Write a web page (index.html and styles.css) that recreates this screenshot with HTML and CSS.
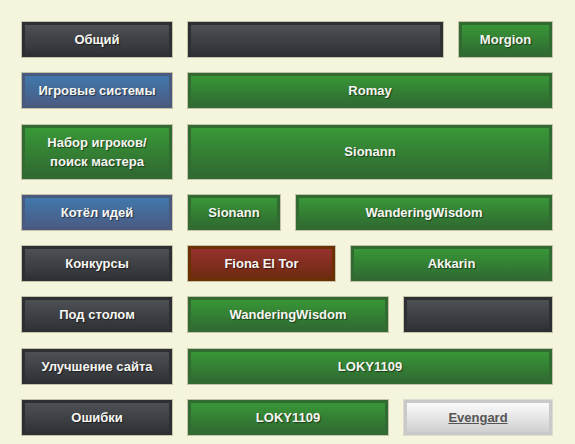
FILE: index.html
```html
<!DOCTYPE html>
<html lang="ru">
<head>
<meta charset="utf-8">
<title>Форум</title>
<link rel="stylesheet" href="styles.css">
</head>
<body>
<div class="board">
  <div class="row">
    <div class="btn dark side">Общий</div>
    <div class="btn dark w257"></div>
    <div class="btn green fill">Morgion</div>
  </div>
  <div class="row">
    <div class="btn blue side">Игровые системы</div>
    <div class="btn green fill">Romay</div>
  </div>
  <div class="row tall">
    <div class="btn green side">Набор игроков/<br>поиск мастера</div>
    <div class="btn green fill">Sionann</div>
  </div>
  <div class="row">
    <div class="btn blue side">Котёл идей</div>
    <div class="btn green w94">Sionann</div>
    <div class="btn green fill">WanderingWisdom</div>
  </div>
  <div class="row">
    <div class="btn dark side">Конкурсы</div>
    <div class="btn red w149">Fiona El Tor</div>
    <div class="btn green fill">Akkarin</div>
  </div>
  <div class="row">
    <div class="btn dark side">Под столом</div>
    <div class="btn green w202">WanderingWisdom</div>
    <div class="btn dark fill"></div>
  </div>
  <div class="row">
    <div class="btn dark side">Улучшение сайта</div>
    <div class="btn green fill">LOKY1109</div>
  </div>
  <div class="row">
    <div class="btn dark side">Ошибки</div>
    <div class="btn green w202">LOKY1109</div>
    <div class="btn light fill"><a href="#" class="link">Evengard</a></div>
  </div>
</div>
</body>
</html>
```

FILE: styles.css
```css
html, body {
  margin: 0;
  padding: 0;
  background: #f5f4dc;
}
body {
  padding: 21px 22px 0 21px;
  font-family: "Liberation Sans", Arial, sans-serif;
}
.board {
  width: 532px;
  display: flex;
  flex-direction: column;
  gap: 14.3px;
}
.row {
  display: flex;
  gap: 14px;
  height: 37px;
}
.row.tall {
  height: 56px;
}
.btn {
  box-sizing: border-box;
  border: 1px solid #c4c2a8;
  display: flex;
  align-items: center;
  justify-content: center;
  text-align: center;
  color: #f6f6f2;
  font-weight: bold;
  font-size: 13px;
  line-height: 19px;
  text-shadow: 1px 1px 1px rgba(0, 0, 0, 0.5);
  box-shadow: inset 0 0 0 3px var(--frame);
  background: linear-gradient(to bottom, var(--top), var(--bot));
}
.side { width: 152px; flex: none; }
.fill { flex: 1; }
.w257 { width: 257px; flex: none; }
.w94 { width: 94px; flex: none; }
.w149 { width: 149px; flex: none; }
.w202 { width: 202px; flex: none; }

.dark {
  --frame: #2d2f33;
  --top: #505357;
  --bot: #2d2f33;
}
.green {
  --frame: #316b31;
  --top: #399b37;
  --bot: #2f6631;
}
.blue {
  --frame: #4a5a7f;
  --top: #3f7bb0;
  --bot: #4b5980;
}
.red {
  --frame: #6a3002;
  --top: #9a3232;
  --bot: #6a2a0c;
}
.light {
  --frame: #c9c9c9;
  --top: #ffffff;
  --bot: #cbcbcb;
  border-color: #dedcd0;
}
.link {
  color: #555;
  text-decoration: underline;
  text-shadow: none;
}
```
